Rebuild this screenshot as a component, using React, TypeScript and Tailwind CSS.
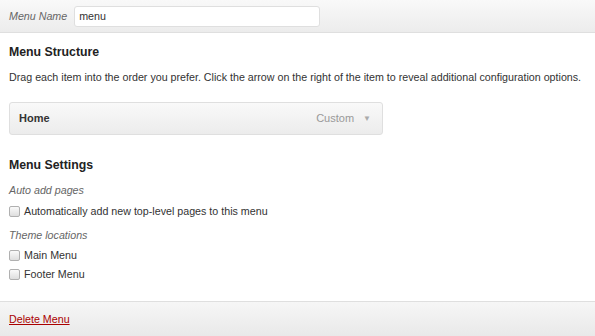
import React from "react";

function Check() {
  return (
    <span className="inline-block w-[11px] h-[11px] rounded-[2px] border border-[#b0b0b0] bg-gradient-to-b from-[#fafafa] to-[#dedede] mr-[4px] shrink-0" />
  );
}

export default function App() {
  return (
    <div className="w-[595px] h-[336px] flex flex-col bg-white text-[#333] font-['Liberation_Sans',Arial,sans-serif] text-[10.7px] overflow-hidden">
      <div className="h-[33px] flex items-center px-[9px] bg-gradient-to-b from-[#f9f9f9] to-[#ececec] border-b border-[#dfdfdf] shrink-0">
        <span className="italic text-[#666] mr-[7px]">Menu Name</span>
        <div className="w-[246px] h-[21px] bg-white border border-[#dfdfdf] rounded-[3px] flex items-center px-[4px] text-[#333]">menu</div>
      </div>
      <div className="flex-1 px-[9px] pt-[11px]">
        <div className="font-bold text-[12.3px] text-[#222] leading-[16px]">Menu Structure</div>
        <div className="mt-[9px] leading-[16px] whitespace-nowrap">Drag each item into the order you prefer. Click the arrow on the right of the item to reveal additional configuration options.</div>
        <div className="mt-[17px] w-[374px] h-[33px] border border-[#dfdfdf] rounded-[3px] bg-gradient-to-b from-[#f9f9f9] to-[#ececec] flex items-center pl-[9px] pr-[11px] text-[11px]">
          <span className="font-bold text-[#333]">Home</span>
          <span className="ml-auto text-[#999]">Custom</span>
          <span className="ml-[9px] text-[#aaa] text-[8px]">▼</span>
        </div>
        <div className="mt-[22px] font-bold text-[12.3px] text-[#222] leading-[16px]">Menu Settings</div>
        <div className="mt-[9px] italic text-[#666] leading-[16px]">Auto add pages</div>
        <div className="mt-[5px] flex items-center leading-[16px]"><Check />Automatically add new top-level pages to this menu</div>
        <div className="mt-[8px] italic text-[#666] leading-[16px]">Theme locations</div>
        <div className="mt-[4px] flex items-center leading-[16px]"><Check />Main Menu</div>
        <div className="mt-[3px] flex items-center leading-[16px]"><Check />Footer Menu</div>
      </div>
      <div className="h-[35px] flex items-center px-[9px] bg-gradient-to-b from-[#f6f6f6] to-[#e9e9e9] border-t border-[#dfdfdf] shrink-0">
        <span className="text-[#aa0000] underline">Delete Menu</span>
      </div>
    </div>
  );
}
